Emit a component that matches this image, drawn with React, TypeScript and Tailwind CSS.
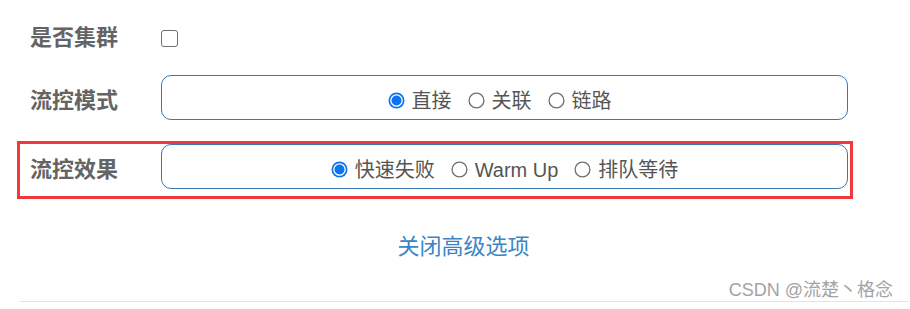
import React from 'react';

const cjk = { fontFamily: '"Liberation Sans", "Noto Sans CJK SC", sans-serif' };

function Radio({ checked }: { checked?: boolean }) {
  return checked ? (
    <svg width="17" height="17" viewBox="0 0 17 17" className="shrink-0">
      <circle cx="8.5" cy="8.5" r="8" fill="#0b74f1" />
      <circle cx="8.5" cy="8.5" r="6.3" fill="#fff" />
      <circle cx="8.5" cy="8.5" r="5" fill="#0b74f1" />
    </svg>
  ) : (
    <svg width="17" height="17" viewBox="0 0 17 17" className="shrink-0">
      <circle cx="8.5" cy="8.5" r="7.4" fill="#fff" stroke="#6f6f6f" strokeWidth="1.3" />
    </svg>
  );
}

function RadioGroup({ options, shift = 0 }: { options: string[]; shift?: number }) {
  return (
    <div className="flex h-[45px] w-[687px] items-center justify-center rounded-[10px] border border-[#3a78b5] pt-[6px]">
      <div className="flex items-center gap-[16px]" style={shift ? { marginRight: shift } : undefined}>
        {options.map((opt, i) => (
          <label key={opt} className="flex items-center gap-[7px] text-[20px] leading-none text-[#555]">
            <Radio checked={i === 0} />
            <span>{opt}</span>
          </label>
        ))}
      </div>
    </div>
  );
}

function Label({ children }: { children: React.ReactNode }) {
  return (
    <div className="w-[131px] shrink-0 text-[22px] font-bold leading-none text-[#646464]">{children}</div>
  );
}

export default function App() {
  return (
    <div className="h-[309px] w-[910px] overflow-hidden bg-white" style={cjk}>
      <div className="pl-[30px] pt-[23px]">
        <div className="flex h-[30px] items-center">
          <Label>是否集群</Label>
          <div className="h-[17px] w-[17px] rounded-[3px] border border-[#6f6f6f] bg-white" />
        </div>

        <div className="mt-[22px] flex items-center">
          <div className="pt-[6px]">
            <Label>流控模式</Label>
          </div>
          <RadioGroup options={['直接', '关联', '链路']} shift={10} />
        </div>

        <div className="relative mt-[24px] flex w-[818px] items-center">
          <div className="pt-[6px]">
            <Label>流控效果</Label>
          </div>
          <RadioGroup options={['快速失败', 'Warm Up', '排队等待']} />
          <div className="pointer-events-none absolute -top-[3px] -right-[5px] -bottom-[10px] -left-[13px] border-[3px] border-[#f0393b]" />
        </div>
      </div>

      <div className="mt-[43px] flex justify-center pl-[17px]">
        <span className="text-[22px] leading-[30px] text-[#3b84c6]">关闭高级选项</span>
      </div>

      <div className="ml-[20px] mr-[2px] mt-[18px] border-b border-[#e3e3e3] pb-[1px]">
        <div className="flex justify-end pr-[15px] text-[18px] leading-[20px] text-[#a3a3a3]">CSDN @流楚丶格念</div>
      </div>
    </div>
  );
}
